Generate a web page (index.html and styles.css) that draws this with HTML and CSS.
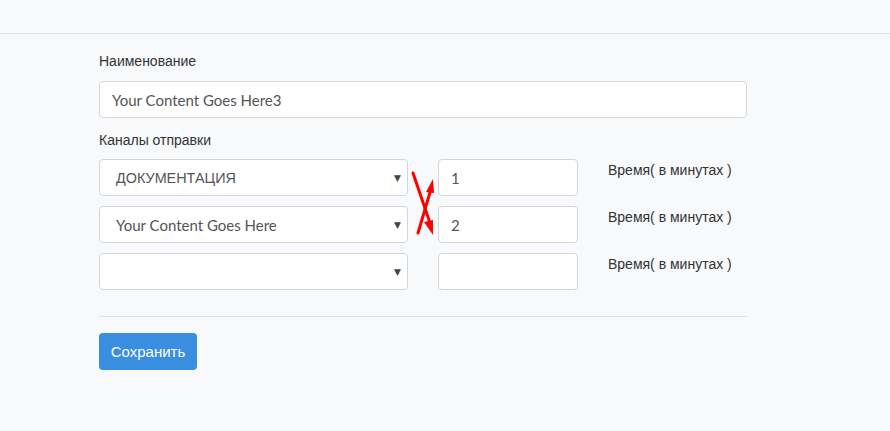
FILE: index.html
```html
<!DOCTYPE html>
<html lang="ru">
<head>
<meta charset="utf-8">
<link rel="stylesheet" href="styles.css">
</head>
<body>
<div class="topbar"></div>
<main class="form">
  <label class="label">Наименование</label>
  <div class="field wide"><span class="val">Your Content Goes Here3</span></div>
  <label class="label second">Каналы отправки</label>
  <div class="channels">
    <div class="row">
      <div class="field select"><span class="val caps">ДОКУМЕНТАЦИЯ</span><span class="caret">▼</span></div>
      <div class="field num"><span class="val">1</span></div>
      <div class="time">Время( в минутах )</div>
    </div>
    <div class="row">
      <div class="field select"><span class="val">Your Content Goes Here</span><span class="caret">▼</span></div>
      <div class="field num"><span class="val">2</span></div>
      <div class="time">Время( в минутах )</div>
    </div>
    <div class="row">
      <div class="field select"><span class="val"></span><span class="caret">▼</span></div>
      <div class="field num"><span class="val"></span></div>
      <div class="time">Время( в минутах )</div>
    </div>
    <svg class="arrows" width="40" height="80" viewBox="0 0 40 80">
      <line x1="5" y1="14" x2="22" y2="64" stroke="#ff0000" stroke-width="3" stroke-linecap="round"/>
      <polygon points="25,76 16,63 25,61" fill="#ff0000"/>
      <line x1="10" y1="74" x2="23" y2="30" stroke="#ff0000" stroke-width="3" stroke-linecap="round"/>
      <polygon points="25,20 18,33 26,34" fill="#ff0000"/>
    </svg>
  </div>
  <hr class="divider">
  <button class="btn">Сохранить</button>
</main>
</body>
</html>
```
FILE: styles.css
```css
html, body {
  margin: 0;
  padding: 0;
  background: #f8f9fb;
}
body {
  font-family: "Liberation Sans", Arial, sans-serif;
  color: #333;
  font-size: 14px;
}
.topbar {
  height: 33px;
  border-bottom: 1px solid #dddfe2;
}
.form {
  width: 648px;
  margin-left: 99px;
  padding-top: 18px;
  display: flex;
  flex-direction: column;
}
.label {
  display: block;
  font-size: 14px;
  line-height: 18px;
  color: #333;
  margin-bottom: 11px;
}
.label.second {
  margin-top: 13px;
  margin-bottom: 10px;
}
.field {
  box-sizing: border-box;
  height: 37px;
  background: #fff;
  border: 1px solid #d3d5d8;
  border-radius: 4px;
  display: flex;
  align-items: center;
  padding: 0 12px;
  font-family: Lato, "Liberation Sans", sans-serif;
  font-size: 15px;
  color: #555;
}
.field.wide {
  width: 648px;
}
.channels {
  position: relative;
  display: flex;
  flex-direction: column;
  gap: 10px;
}
.row {
  display: flex;
  align-items: flex-start;
}
.field.select {
  width: 309px;
  padding-left: 16px;
  padding-right: 6px;
  justify-content: space-between;
}
.val.caps {
  font-family: "Liberation Sans", Arial, sans-serif;
  font-size: 14.4px;
  color: #555;
}
.caret {
  font-size: 9px;
  color: #444;
  font-family: "DejaVu Sans", sans-serif;
}
.field.num {
  width: 140px;
  margin-left: 30px;
}
.time {
  margin-left: 30px;
  padding-top: 3px;
  font-size: 14px;
  color: #333;
}
.arrows {
  position: absolute;
  left: 309px;
  top: 0;
}
.divider {
  width: 648px;
  margin: 26px 0 16px 0;
  border: 0;
  border-top: 1px solid #dddfe2;
  height: 0;
}
.btn {
  width: 98px;
  height: 37px;
  border: 0;
  border-radius: 4px;
  background: #3a8ee0;
  color: #fff;
  font-family: "Liberation Sans", Arial, sans-serif;
  font-size: 15px;
  padding: 0;
  cursor: pointer;
}
```
